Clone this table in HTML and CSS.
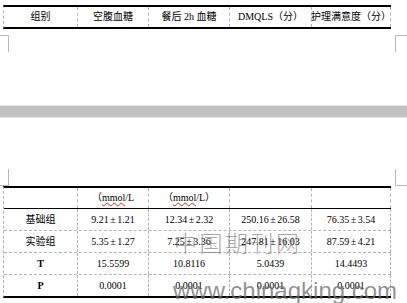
FILE: index.html
```html
<!DOCTYPE html>
<html lang="zh">
<head>
<meta charset="utf-8">
<title>表格</title>
<link rel="stylesheet" href="styles.css">
</head>
<body>
<div class="page">
  <section class="top">
    <div class="tbl tbl-top">
      <div class="row head">
        <div class="cell">组别</div>
        <div class="cell">空腹血糖</div>
        <div class="cell">餐后 2h 血糖</div>
        <div class="cell">DMQLS（分）</div>
        <div class="cell">护理满意度（分）</div>
      </div>
    </div>
    <div class="marks marks-top"><span class="mk mk-tl"></span><span class="mk mk-tr"></span></div>
  </section>
  <div class="band"></div>
  <section class="bottom">
    <div class="marks marks-bot"><span class="mk mk-bl"></span><span class="mk mk-br"></span></div>
    <div class="tbl tbl-bot">
      <div class="row head">
        <div class="cell"></div>
        <div class="cell">（<span class="spell">mmol</span>/L</div>
        <div class="cell">（<span class="spell">mmol</span>/L）</div>
        <div class="cell"></div>
        <div class="cell"></div>
      </div>
      <div class="row">
        <div class="cell">基础组</div>
        <div class="cell">9.21<span class="pm">±</span>1.21</div>
        <div class="cell">12.34<span class="pm">±</span>2.32</div>
        <div class="cell">250.16<span class="pm">±</span>26.58</div>
        <div class="cell">76.35<span class="pm">±</span>3.54</div>
      </div>
      <div class="row">
        <div class="cell">实验组</div>
        <div class="cell">5.35<span class="pm">±</span>1.27</div>
        <div class="cell">7.25<span class="pm">±</span>3.36</div>
        <div class="cell">247.81<span class="pm">±</span>16.03</div>
        <div class="cell">87.59<span class="pm">±</span>4.21</div>
      </div>
      <div class="row">
        <div class="cell lbl">T</div>
        <div class="cell">15.5599</div>
        <div class="cell">10.8116</div>
        <div class="cell">5.0439</div>
        <div class="cell">14.4493</div>
      </div>
      <div class="row last">
        <div class="cell lbl">P</div>
        <div class="cell">0.0001</div>
        <div class="cell">0.0001</div>
        <div class="cell">0.0001</div>
        <div class="cell">0.0001</div>
      </div>
    </div>
  </section>
  <div class="wm wm-cn">中国期刊网</div>
  <div class="wm wm-url">www.chinaqking.com</div>
</div>
</body>
</html>
```
FILE: styles.css
```css
html, body {
  margin: 0;
  padding: 0;
  background: #fff;
}
.page {
  position: relative;
  width: 407px;
  height: 303px;
  overflow: hidden;
  display: flex;
  flex-direction: column;
  font-family: "Liberation Serif", "Noto Sans CJK SC", serif;
  font-size: 10px;
  color: #000;
}
.top {
  padding-top: 5px;
  display: flex;
  flex-direction: column;
}
.tbl {
  margin-left: 3px;
  width: 388px;
  box-sizing: border-box;
  border-left: 1px dashed #b4b4b4;
  display: flex;
  flex-direction: column;
}
.tbl-top {
  border-top: 2px solid #000;
  border-bottom: 2px solid #000;
}
.tbl-top .row {
  height: 20px;
}
.tbl-bot {
  border-top: 2px solid #000;
  border-bottom: 2px solid #000;
}
.row {
  display: grid;
  grid-template-columns: 74px 71px 81px 82px 79px;
  height: 22px;
  box-sizing: border-box;
  border-bottom: 1px dashed #b4b4b4;
}
.tbl-bot .row.head {
  height: 21px;
  border-bottom: 1px solid #000;
}
.tbl-bot .row.last {
  height: 21px;
  border-bottom: none;
}
.tbl-top .row.head {
  border-bottom: none;
}
.cell {
  box-sizing: border-box;
  border-right: 1px dashed #b4b4b4;
  display: flex;
  align-items: center;
  justify-content: center;
  white-space: nowrap;
  line-height: 12px;
}
.lbl {
  font-weight: bold;
}
.pm {
  padding: 0 1.5px;
}
.spell {
  text-decoration: underline wavy #e02020;
  text-decoration-thickness: 1px;
  text-underline-offset: 1px;
}
.marks {
  display: flex;
  justify-content: space-between;
}
.marks-top {
  margin-top: 6px;
}
.mk {
  display: block;
  height: 17px;
  box-sizing: border-box;
  border-color: #b8b8b8;
  border-style: solid;
  border-width: 0;
}
.mk-tl {
  width: 9px;
  border-top-width: 1px;
  border-right-width: 1px;
}
.mk-tr {
  width: 12px;
  border-top-width: 1px;
  border-left-width: 1px;
}
.mk-bl {
  width: 9px;
  border-bottom-width: 1px;
  border-right-width: 1px;
}
.mk-br {
  width: 12px;
  border-bottom-width: 1px;
  border-left-width: 1px;
}
.band {
  margin-top: 53px;
  height: 13px;
  box-sizing: border-box;
  background: #c1c1c1;
  border-top: 1px solid #e4e4e4;
  border-bottom: 1px solid #e4e4e4;
}
.bottom {
  margin-top: 51px;
  display: flex;
  flex-direction: column;
}
.wm {
  position: absolute;
  white-space: nowrap;
  pointer-events: none;
}
.wm-cn {
  left: 174px;
  top: 228px;
  font-family: "Noto Sans CJK SC", sans-serif;
  font-size: 23px;
  font-weight: 300;
  line-height: 28px;
  letter-spacing: 2.5px;
  color: rgba(110, 110, 110, 0.62);
}
.wm-url {
  left: 173px;
  top: 279px;
  font-family: "Liberation Sans", sans-serif;
  font-size: 24px;
  line-height: 24px;
  color: rgba(110, 110, 110, 0.75);
}
```
